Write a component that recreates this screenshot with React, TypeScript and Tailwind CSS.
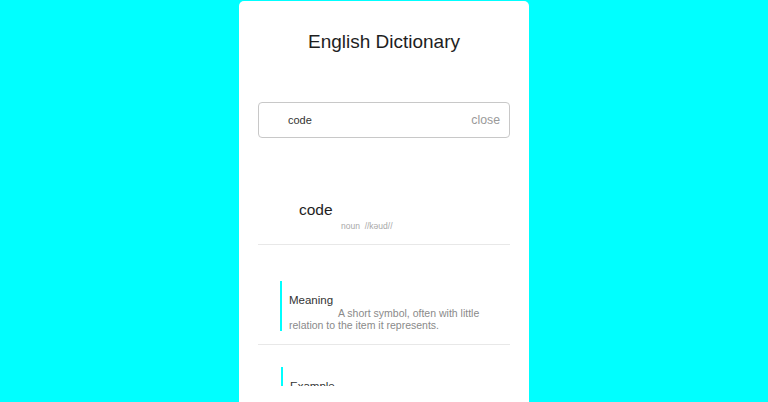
import React from 'react'

type Entry = {
  label: string
  text: string
}

const entries: Entry[] = [
  { label: 'Meaning', text: 'A short symbol, often with little relation to the item it represents.' },
  { label: 'Example', text: 'The code for the alarm was written on a slip of paper.' },
]

const EntryBlock: React.FC<{ entry: Entry; first?: boolean }> = ({ entry, first }) => (
  <div className={first ? 'pt-[36px] pb-[13px] border-b border-[#e8e8e8]' : 'pt-[22px] pb-[13px]'}>
    <div className={`border-l-2 border-[#00ffff] pt-[12px] pl-[7px] pr-[10px] ${first ? 'ml-[22px]' : 'ml-[23px]'}`}>
      <h3 className="text-[11.5px] leading-[14px] text-[#333]">{entry.label}</h3>
      <p className="text-[10.5px] leading-[12px] text-[#8a8a8a] indent-[49px]">{entry.text}</p>
    </div>
  </div>
)

export default function App() {
  return (
    <div className="h-screen bg-[#00ffff] overflow-hidden pt-px" style={{ fontFamily: '"Liberation Sans", Arial, sans-serif' }}>
      <div className="mx-auto w-[290px] h-full rounded-t-[5px] bg-white px-[19px] pt-[29px]">
        <h1 className="text-center text-[19px] leading-[24px] text-[#1e1e1e]">English Dictionary</h1>

        <div className="mt-[48px] flex h-[36px] items-center justify-between rounded-[4px] border border-[#c8c8c8] pl-[29px] pr-[9px]">
          <span className="text-[11px] text-[#333]">code</span>
          <span className="text-[12.3px] text-[#9a9a9a]">close</span>
        </div>

        <div className="h-[248px] overflow-hidden">
          <div className="mt-[62px] border-b border-[#e8e8e8] pb-[12px]">
            <div className="pl-[41px] text-[15.5px] leading-[20px] text-[#1e1e1e]">code</div>
            <div className="pl-[83px] text-[8.5px] leading-[12px] text-[#a8a8a8]">noun &nbsp;//kəud//</div>
          </div>

          {entries.map((entry, i) => (
            <EntryBlock key={entry.label} entry={entry} first={i === 0} />
          ))}
        </div>
      </div>
    </div>
  )
}
